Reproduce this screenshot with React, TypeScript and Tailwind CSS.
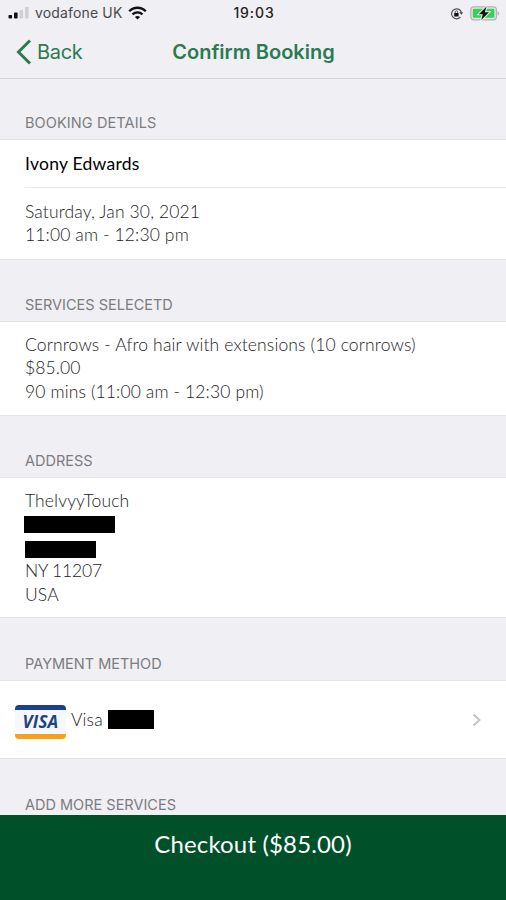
import { ReactNode } from 'react'
import clsx from 'clsx'

function SignalIcon() {
  return (
    <svg width="22" height="12" viewBox="0 0 22 12">
      <rect x="0.5" y="8" width="3.6" height="3.5" rx="0.8" fill="#111" />
      <rect x="6" y="5.4" width="3.6" height="6.1" rx="0.8" fill="#111" />
      <rect x="11.5" y="3" width="3.6" height="8.5" rx="0.8" fill="#d0d0d4" />
      <rect x="17" y="0" width="3.6" height="11.5" rx="0.8" fill="#d0d0d4" />
    </svg>
  )
}

function WifiIcon() {
  return (
    <svg width="19" height="14" viewBox="0 0 19 14" fill="none" stroke="#111">
      <path d="M1.2 5.2C5.8 0.6 13.2 0.6 17.8 5.2" strokeWidth="2.3" />
      <path d="M4.5 8.4C7.4 5.6 11.6 5.6 14.5 8.4" strokeWidth="2.2" />
      <path d="M9.5 13.6L6.9 11C8.3 9.6 10.7 9.6 12.1 11Z" fill="#111" stroke="none" />
    </svg>
  )
}

function RotationLockIcon() {
  return (
    <svg width="13" height="13" viewBox="0 0 13 13" fill="none" stroke="#555">
      <path d="M10.4 10A5 5 0 1 1 11.3 5.2" strokeWidth="1.2" />
      <path d="M9.4 5.2H13L11.5 7.8Z" fill="#333" stroke="none" />
      <rect x="4.2" y="5.9" width="4.4" height="3.6" rx="0.5" fill="#111" stroke="none" />
      <path d="M5.2 6V4.9A1.2 1.2 0 0 1 7.6 4.9V6" strokeWidth="0.9" />
    </svg>
  )
}

function BatteryIcon() {
  return (
    <svg width="30" height="15" viewBox="0 0 30 15">
      <rect x="0.8" y="0.8" width="25.6" height="13" rx="3" fill="#e6e6e8" stroke="#b4b4b8" strokeWidth="1.3" />
      <rect x="2.8" y="2.8" width="21.6" height="9" rx="1.2" fill="#35d158" />
      <path d="M27.6 5V9.8C29.6 9 29.6 5.8 27.6 5Z" fill="#b4b4b8" />
      <path
        d="M16.6 0.6L8.8 8.2H12.8L11.2 14L19 6.3H14.8Z"
        fill="#111"
        stroke="#e3f5e7"
        strokeWidth="2"
        paintOrder="stroke"
      />
    </svg>
  )
}

function VisaCard() {
  return (
    <div className="flex h-[34px] w-[51px] flex-col overflow-hidden rounded-[4px] bg-[#f5f9fd]">
      <div className="h-[5px] bg-[#1d3f8f]" />
      <div className="flex flex-1 items-center justify-center pb-px font-['Open_Sans',sans-serif] text-[17px] leading-none font-bold tracking-[0.2px] text-[#1d4388] italic">
        VISA
      </div>
      <div className="h-[5px] bg-[#f9a01b]" />
    </div>
  )
}

function Redacted({ className }: { className: string }) {
  return <span className={clsx('block bg-black', className)} />
}

function SectionHeader({ title, className }: { title: string; className: string }) {
  return (
    <h2
      className={clsx(
        "flex items-end border-[#e2e2e6] pl-[25px] font-['Inter',sans-serif] text-[14.5px] leading-[18px] font-normal text-[#7c7c80]",
        className,
      )}
    >
      {title}
    </h2>
  )
}

function Cell({ children, className }: { children: ReactNode; className: string }) {
  return <div className={clsx('bg-white pl-[25px]', className)}>{children}</div>
}

export default function App() {
  return (
    <div className="flex h-[900px] w-[506px] flex-col overflow-hidden bg-[#f0eff4] font-['Lato',sans-serif] text-[17.5px] leading-[23.3px] font-light tracking-[0.13px] text-[#1c1c1e]">
      <div className="grid h-[26px] grid-cols-3 items-center pr-[6px] pl-2 font-['Inter',sans-serif] text-[14px] leading-none font-normal tracking-normal">
        <div className="flex items-center text-[#4a4a4d]">
          <SignalIcon />
          <span className="ml-[5px] tracking-[0.15px] whitespace-nowrap">vodafone UK</span>
          <span className="ml-[6px]">
            <WifiIcon />
          </span>
        </div>
        <span className="text-center font-medium tracking-[0.9px] text-[#222]">19:03</span>
        <div className="flex items-center justify-end gap-[7px]">
          <RotationLockIcon />
          <BatteryIcon />
        </div>
      </div>

      <div className="grid h-[53px] grid-cols-[1fr_auto_1fr] items-center border-b border-[#d6d6da] tracking-normal text-[#2b7a52]">
        <button className="flex items-center pl-4 font-['Inter',sans-serif] text-[20px] leading-none font-normal tracking-[-0.3px]">
          <svg width="16" height="26" viewBox="0 0 16 26" fill="none" stroke="#2b7a52" strokeWidth="3">
            <path d="M14 1.5L2.5 13L14 24.5" />
          </svg>
          <span className="ml-[5px]">Back</span>
        </button>
        <h1 className="pl-px font-['Inter',sans-serif] text-[20px] leading-none font-semibold">Confirm Booking</h1>
      </div>

      <SectionHeader title="BOOKING DETAILS" className="h-[61px] border-b pb-[7px] tracking-[0.1px]" />
      <Cell className="h-[119px]">
        <div className="flex h-[48px] items-center border-b border-[#e8e8eb] font-normal tracking-[0.25px] text-black">
          Ivony Edwards
        </div>
        <div className="pt-3">
          <p>Saturday, Jan 30, 2021</p>
          <p>11:00 am - 12:30 pm</p>
        </div>
      </Cell>

      <SectionHeader title="SERVICES SELECETD" className="h-[63px] border-y pb-[7px] tracking-normal" />
      <Cell className="h-[93px] pt-[11px]">
        <p>Cornrows - Afro hair with extensions (10 cornrows)</p>
        <p>$85.00</p>
        <p>90 mins (11:00 am - 12:30 pm)</p>
      </Cell>

      <SectionHeader title="ADDRESS" className="h-[63px] border-y pb-[7px] tracking-normal" />
      <Cell className="h-[139px] pt-[11px]">
        <p>TheIvyyTouch</p>
        <Redacted className="mt-[4px] -ml-px h-[17px] w-[91px]" />
        <Redacted className="mt-[8px] h-[17px] w-[71px]" />
        <p className="mt-px tracking-[-0.2px]">NY 11207</p>
        <p>USA</p>
      </Cell>

      <SectionHeader title="PAYMENT METHOD" className="h-[64px] border-y pb-[7px] tracking-normal" />
      <div className="flex h-[77px] items-center bg-white pr-[24px] pl-[15px]">
        <div className="mt-[5px]">
          <VisaCard />
        </div>
        <span className="ml-[5px] w-[37px]">Visa</span>
        <Redacted className="-mt-px h-[19px] w-[46px]" />
        <svg className="ml-auto" width="10" height="14" viewBox="0 0 10 14" fill="none" stroke="#c4c4c7" strokeWidth="2">
          <path d="M1.5 1.5L7.5 7L1.5 12.5" />
        </svg>
      </div>

      <SectionHeader title="ADD MORE SERVICES" className="h-[57px] border-t pb-px tracking-normal" />
      <button className="flex flex-1 justify-center bg-[#005029] pt-[15px] text-[24px] leading-[28px] font-normal tracking-[0.15px] text-white">
        Checkout ($85.00)
      </button>
    </div>
  )
}
